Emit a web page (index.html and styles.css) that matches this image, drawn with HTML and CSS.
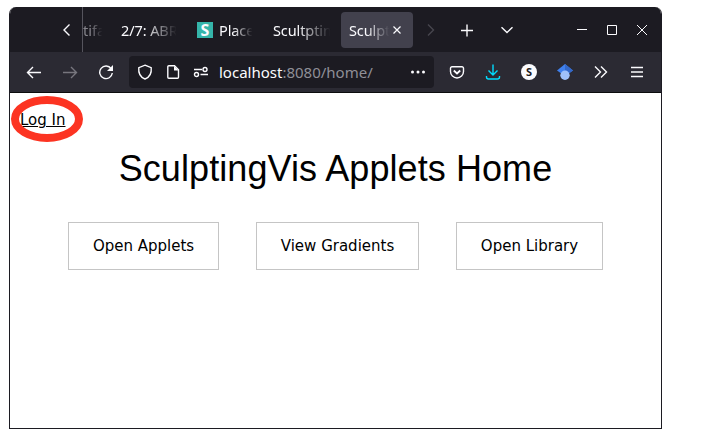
FILE: index.html
```html
<!DOCTYPE html>
<html lang="en">
<head>
<meta charset="utf-8">
<title>SculptingVis Applets Home</title>
<link rel="stylesheet" href="styles.css">
</head>
<body>
<div class="window">
  <div class="tabbar">
    <div class="scroll-left"><svg width="16" height="16"><path d="M10.500 2.500 5 8l5.500 5.500"/></svg></div>
    <div class="tab tab-first"><span class="label dim">tifa</span></div>
    <div class="tab tab-abr"><span class="label">2/7: ABR</span></div>
    <div class="tab tab-place"><span class="favicon">S</span><span class="label">Place</span></div>
    <div class="tab tab-sculpt"><span class="label">Scultptin</span></div>
    <div class="tab tab-active"><span class="label">Sculpt</span><svg width="16" height="16"><path d="m4.500 4.500 7 7m0-7-7 7"/></svg></div>
    <div class="slot faded"><svg width="16" height="16"><path d="m5 2.500 5.500 5.500L5 13.500"/></svg></div>
    <div class="slot"><svg width="16" height="16"><path d="M8 2.500v12M2 8.500h12"/></svg></div>
    <div class="slot all-tabs"><svg width="16" height="16"><path d="M2.500 5.200 8 10.500l5.500-5.300"/></svg></div>
    <div class="controls">
      <svg width="12" height="12"><path d="M1 5.500h10"/></svg>
      <svg width="12" height="12"><path d="M1.500 1.500h9v9h-9z"/></svg>
      <svg width="12" height="12"><path d="m1 1 10 10M11 1 1 11"/></svg>
    </div>
  </div>
  <div class="toolbar">
    <div class="slot"><svg width="16" height="16"><path d="M15 8.500H1.500M7 3 1.500 8.500 7 14"/></svg></div>
    <div class="slot forward"><svg width="16" height="16"><path d="M1 8.500h13.500M9 3l5.500 5.500L9 14"/></svg></div>
    <div class="slot"><svg width="16" height="16"><path d="M13.200 4.700A6.300 6.300 0 1 0 14.300 9"/><path class="solid" d="M15 1v6H9z"/></svg></div>
    <div class="urlbar">
      <svg width="16" height="16"><path d="M8 1.200 14.200 3.700c.5 4.700-1.200 9.300-6.200 11.300C3 13 1.300 8.400 1.800 3.700z"/></svg>
      <svg width="16" height="16"><path d="M3.800 1.700h5.700l4 4v7.600a1 1 0 0 1-1 1H3.800a1 1 0 0 1-1-1V2.700a1 1 0 0 1 1-1z"/><path class="solid" d="M9 2v4.500h4.500z"/></svg>
      <svg width="16" height="16"><path d="M1 5.500h8M7.500 10.500H15"/><circle cx="12" cy="5.500" r="2"/><circle cx="3.500" cy="10.500" r="2"/></svg>
      <span class="url">localhost<span>:8080/home/</span></span>
      <svg class="more" width="16" height="16"><circle class="solid" cx="2.500" cy="8" r="1.500"/><circle class="solid" cx="8" cy="8" r="1.500"/><circle class="solid" cx="13.500" cy="8" r="1.500"/></svg>
    </div>
    <div class="slot"><svg width="16" height="16"><path d="M3 2.700h10a1.500 1.500 0 0 1 1.500 1.500V7.500a6.500 6.500 0 0 1-13 0V4.200A1.500 1.500 0 0 1 3 2.700z"/><path class="bold" d="m4.800 6.500 3.200 3 3.200-3"/></svg></div>
    <div class="slot download"><svg width="16" height="16"><path d="M8 .5v10M3.500 6.500 8 11l4.500-4.500M1.500 12v1a2 2 0 0 0 2 2h9a2 2 0 0 0 2-2v-1"/></svg></div>
    <div class="slot"><span class="badge">S</span></div>
    <div class="slot"><svg class="scholar" width="16" height="16"><path fill="#3f80ee" d="M8 0 0 6.500 3.500 9h9L16 6.500z"/><path fill="#3468c8" d="m8 0 8 6.500L12.500 9 8 6z"/><circle fill="#9fc1fa" cx="8" cy="11.300" r="4.700"/></svg></div>
    <div class="slot"><svg width="16" height="16"><path d="m2 2.500 5.500 5.500L2 13.500m6-11L13.500 8 8 13.500"/></svg></div>
    <div class="slot"><svg width="16" height="16"><path d="M2 3.500h12M2 8h12M2 12.500h12"/></svg></div>
  </div>
  <main class="page">
    <div class="login"><a class="login-link">Log In</a><svg class="ring" width="74" height="48"><ellipse cx="37" cy="24" rx="32" ry="19"/></svg></div>
    <h1>SculptingVis Applets Home</h1>
    <nav class="actions">
      <a class="btn applets">Open Applets</a>
      <a class="btn gradients">View Gradients</a>
      <a class="btn library">Open Library</a>
    </nav>
  </main>
</div>
</body>
</html>
```

FILE: styles.css
```css
* { box-sizing: border-box; }
body { margin: 0; background: #fff; }
.window {
  width: 653px; height: 422px; margin: 7px 0 0 9px;
  border: 1px solid #1c1b22; border-top: 0;
  border-radius: 7px 7px 0 0; overflow: hidden; background: #fff;
}
svg { display: block; flex: none; fill: none; stroke: #fbfbfe; stroke-width: 1.400; }
.solid { fill: #fbfbfe; stroke: none; }
.bold { stroke-width: 1.800; }
.tabbar, .toolbar { display: flex; align-items: center; color: #fbfbfe; font-family: "Noto Sans", sans-serif; }
.tabbar { height: 45px; background: #1c1b22; font-size: 14.500px; }
.scroll-left { display: flex; align-items: center; justify-content: flex-end; width: 73px; height: 45px; padding-right: 7px; border-right: 1px solid #55545d; }
.tab { display: flex; align-items: center; flex: none; height: 36px; }
.label { flex: 1; min-width: 0; white-space: nowrap; line-height: 24px; letter-spacing: -0.1px; mask-image: linear-gradient(to right, #000 40%, transparent 96%); }
.dim { color: #85848b; }
.tab-first { width: 26px; }
.tab-first .label { letter-spacing: 0; mask-image: linear-gradient(to right, #000 30%, transparent 75%); }
.tab-abr { width: 58px; margin-left: 12px; }
.tab-place { width: 57px; margin-left: 18px; }
.tab-sculpt { width: 60px; margin-left: 19px; }
.tab-active { width: 72px; margin-left: 8px; padding: 0 8px; border-radius: 4px; background: #42414d; }
.tab-active .label { flex: 0 0 42px; }
.tab-active svg { margin-left: -2px; stroke-width: 1.200; }
.favicon { width: 16px; height: 16px; margin-right: 6px; background: #35b5aa; font: bold 16px/16px "Noto Sans", sans-serif; text-align: center; }
.slot { display: flex; align-items: center; justify-content: center; flex: none; width: 36px; height: 36px; }
.faded svg { stroke: #47464e; }
.all-tabs { margin-left: 4px; }
.controls { display: flex; gap: 18px; margin-left: 51px; }
.controls svg { stroke-width: 1; }
.toolbar { height: 41px; padding-left: 6px; background: #2b2a33; border-bottom: 1px solid #0c0c0d; }
.forward svg { stroke: #77767e; }
.urlbar { display: flex; align-items: center; gap: 12px; width: 305px; height: 32px; margin: 0 5px; padding: 0 8px; border-radius: 4px; background: #1c1b22; }
.url { margin-left: -2px; font-size: 15px; line-height: 24px; white-space: nowrap; }
.url span { color: #8f8f97; }
.more { margin-left: auto; }
.download svg { stroke: #00ddff; }
.badge { width: 16px; height: 16px; border-radius: 50%; background: #fbfbfe; color: #1c1b22; font: bold 11px/16px "Noto Sans", sans-serif; text-align: center; }
.scholar { stroke: none; }
.page { padding-top: 17px; color: #000; }
.login { position: relative; height: 20px; padding-left: 10px; font: 15px/20px "DejaVu Sans", sans-serif; }
.login-link { text-decoration: underline; }
.ring { position: absolute; left: 0; top: -15px; stroke: #fc3422; stroke-width: 8; }
h1 { margin: 18px 0 0; font: 36px/42px "Liberation Sans", Arial, sans-serif; letter-spacing: 0.08px; text-align: center; }
.actions { display: flex; gap: 37px; margin: 32px 0 0 58px; }
.btn { display: flex; align-items: center; justify-content: center; height: 48px; border: 1px solid #c5c5c5; font: 15px/20px "DejaVu Sans", sans-serif; white-space: nowrap; }
.applets { width: 151px; }
.gradients { width: 163px; }
.library { width: 147px; }
```
